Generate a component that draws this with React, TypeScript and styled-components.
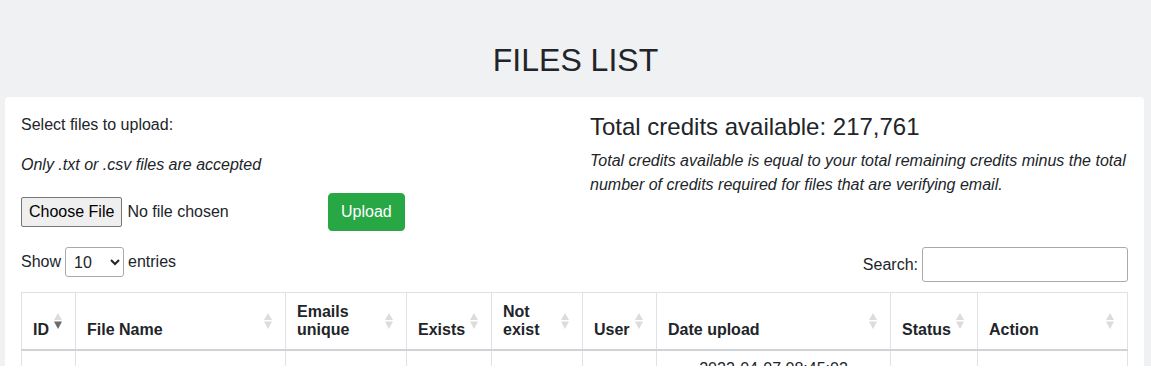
import React from "react";
import styled, { createGlobalStyle } from "styled-components";

const GlobalStyle = createGlobalStyle`
  body {
    margin: 0;
    background: #fff;
    font-family: "Liberation Sans", Arial, sans-serif;
    color: #212529;
  }
`;

const Page = styled.div`
  height: 366px;
  overflow: hidden;
  background: #f0f1f3;
`;

const Title = styled.h1`
  margin: 0;
  padding: 41px 0 18px;
  font-size: 32px;
  font-weight: 400;
  line-height: 1.2;
  text-align: center;
`;

const Container = styled.div`
  margin: 0 7px 0 5px;
`;

const Card = styled.div`
  background: #fff;
  border-radius: 4px;
  padding: 16px;
  min-height: 400px;
`;

const TopRow = styled.div`
  display: grid;
  grid-template-columns: 1fr 1fr;
  column-gap: 31px;
`;

const Text = styled.p<{ $italic?: boolean }>`
  margin: 0 0 16px;
  font-size: 16px;
  line-height: 24px;
  font-style: ${(p) => (p.$italic ? "italic" : "normal")};
`;

const UploadRow = styled.div`
  display: flex;
  align-items: center;
`;

const FileInput = styled.input`
  width: 307px;
  font-family: inherit;
  font-size: 16px;
  color: #212529;

  &::file-selector-button {
    font-family: inherit;
    font-size: 16px;
    padding: 5px 7px;
    margin-right: 5px;
    border: 1px solid #767676;
    border-radius: 2px;
    background: #efefef;
    color: #000;
  }
`;

const Button = styled.button`
  font-family: inherit;
  font-size: 16px;
  line-height: 24px;
  padding: 6px 12px;
  color: #fff;
  background: #28a745;
  border: 1px solid #28a745;
  border-radius: 4px;
`;

const Credits = styled.h4`
  margin: 0 0 7px;
  font-size: 24px;
  font-weight: 400;
  line-height: 1.2;
`;

const Controls = styled.div`
  display: flex;
  justify-content: space-between;
  align-items: flex-start;
  margin-top: 16px;
`;

const Length = styled.label`
  display: flex;
  align-items: center;
  gap: 4px;
  font-size: 16px;
`;

const Select = styled.select`
  width: 59px;
  height: 30px;
  padding: 0 4px;
  font-family: inherit;
  font-size: 16px;
  color: #212529;
  background: #fff;
  border: 1px solid #aaa;
  border-radius: 3px;
`;

const Filter = styled.label`
  display: flex;
  align-items: center;
  gap: 4px;
  font-size: 16px;
`;

const SearchInput = styled.input`
  width: 206px;
  height: 35px;
  box-sizing: border-box;
  border: 1px solid #aaa;
  border-radius: 3px;
  font-family: inherit;
  font-size: 16px;
`;

const Table = styled.table`
  width: 100%;
  margin-top: 10px;
  border-collapse: collapse;
  table-layout: fixed;
`;

const Th = styled.th`
  position: relative;
  padding: 10px 30px 10px 11px;
  font-size: 16px;
  line-height: 1.1;
  font-weight: 700;
  text-align: left;
  vertical-align: bottom;
  border: 1px solid #dee2e6;
  border-bottom: 2px solid #cfd3d7;
  white-space: normal;
`;

const Td = styled.td<{ $center?: boolean }>`
  padding: 8px 10px;
  font-size: 16px;
  line-height: 1.2;
  text-align: ${(p) => (p.$center ? "center" : "left")};
  vertical-align: top;
  border: 1px solid #dee2e6;
`;

const SortMark = styled.svg`
  position: absolute;
  right: 13px;
  top: 50%;
  margin-top: -8px;
`;

const SortIcon = ({ active }: { active?: boolean }) => (
  <SortMark width="8" height="16" viewBox="0 0 8 16">
    <path d="M4 0 L8 7 L0 7 Z" fill="#dcdcdc" />
    <path d="M0 8.5 L8 8.5 L4 16 Z" fill={active ? "#6b6b6b" : "#dcdcdc"} />
  </SortMark>
);

const columns: { label: string; width: number; active?: boolean }[] = [
  { label: "ID", width: 54, active: true },
  { label: "File Name", width: 210 },
  { label: "Emails unique", width: 121 },
  { label: "Exists", width: 85 },
  { label: "Not exist", width: 91 },
  { label: "User", width: 74 },
  { label: "Date upload", width: 234 },
  { label: "Status", width: 87 },
  { label: "Action", width: 150 },
];

const App = () => {
  return (
    <Page>
      <GlobalStyle />
      <Title>FILES LIST</Title>
      <Container>
        <Card>
          <TopRow>
            <div>
              <Text>Select files to upload:</Text>
              <Text $italic>Only .txt or .csv files are accepted</Text>
              <UploadRow>
                <FileInput type="file" accept=".txt,.csv" />
                <Button>Upload</Button>
              </UploadRow>
            </div>
            <div>
              <Credits>Total credits available: 217,761</Credits>
              <Text $italic>
                Total credits available is equal to your total remaining credits minus the total
                number of credits required for files that are verifying email.
              </Text>
            </div>
          </TopRow>
          <Controls>
            <Length>
              Show
              <Select defaultValue="10">
                <option value="10">10</option>
                <option value="25">25</option>
                <option value="50">50</option>
                <option value="100">100</option>
              </Select>
              entries
            </Length>
            <Filter>
              Search:
              <SearchInput type="search" />
            </Filter>
          </Controls>
          <Table>
            <colgroup>
              {columns.map((c) => (
                <col key={c.label} style={{ width: c.width }} />
              ))}
            </colgroup>
            <thead>
              <tr>
                {columns.map((c) => (
                  <Th key={c.label}>
                    {c.label}
                    <SortIcon active={c.active} />
                  </Th>
                ))}
              </tr>
            </thead>
            <tbody>
              <tr>
                <Td />
                <Td />
                <Td />
                <Td />
                <Td />
                <Td />
                <Td $center>2022-04-07 08:45:02</Td>
                <Td />
                <Td />
              </tr>
            </tbody>
          </Table>
        </Card>
      </Container>
    </Page>
  );
};

export default App;
